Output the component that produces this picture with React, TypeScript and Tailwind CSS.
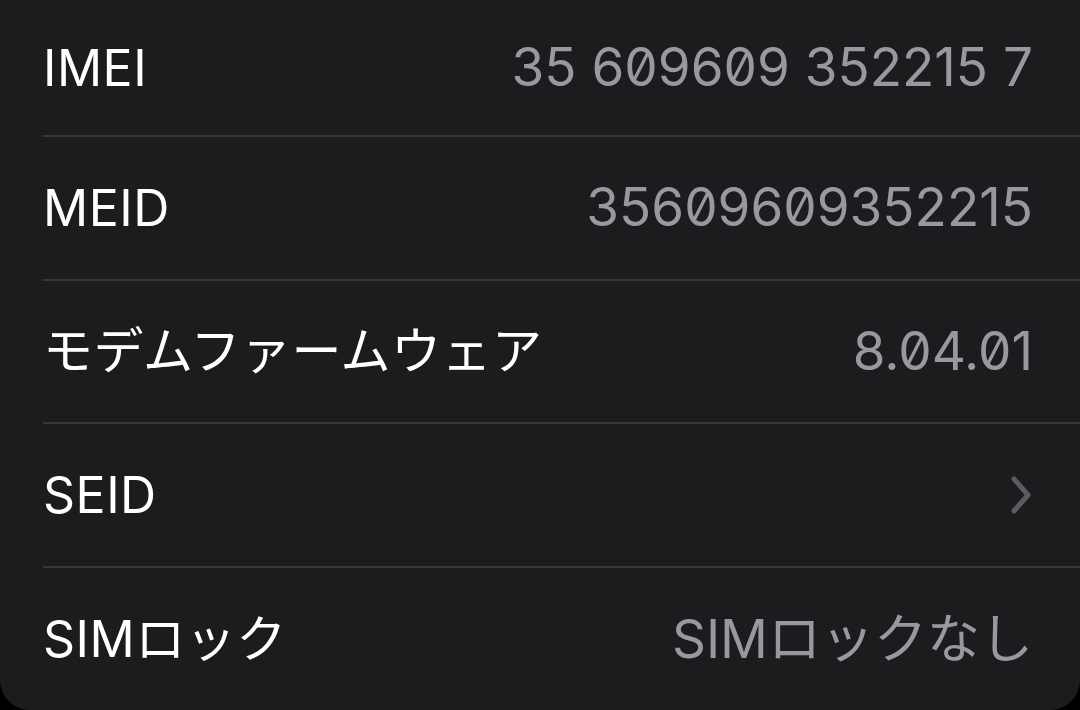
import React from "react";

const rows: { label: string; value?: string; chevron?: boolean }[] = [
  { label: "IMEI", value: "35 609609 352215 7" },
  { label: "MEID", value: "35609609352215" },
  { label: "モデムファームウェア", value: "8.04.01" },
  { label: "SEID", chevron: true },
  { label: "SIMロック", value: "SIMロックなし" },
];

export default function App() {
  return (
    <div className="w-[1080px] h-[710px] bg-black overflow-hidden">
      <div
        className="h-[710px] bg-[#1c1c1e] rounded-b-[30px] pl-[43px]"
        style={{ fontFamily: 'Inter, "Noto Sans CJK JP", sans-serif' }}
      >
        {rows.map((r, i) => (
          <div
            key={r.label}
            className={`flex items-center justify-between pr-[47px] ${
              i === 0 ? "h-[137px]" : "h-[143.5px]"
            } ${i < rows.length - 1 ? "border-b-2 border-[#38383a]" : ""}`}
          >
            <span className="text-[50px] text-white leading-none tracking-[0.01em]">{r.label}</span>
            {r.value && (
              <span className="text-[53px] text-[#98989f] leading-none slashed-zero">
                {r.value}
              </span>
            )}
            {r.chevron && (
              <svg width="24" height="40" viewBox="0 0 24 40">
                <path
                  d="M5 4 L19 20 L5 36"
                  fill="none"
                  stroke="#5b5b60"
                  strokeWidth="5"
                  strokeLinecap="round"
                  strokeLinejoin="round"
                />
              </svg>
            )}
          </div>
        ))}
      </div>
    </div>
  );
}
